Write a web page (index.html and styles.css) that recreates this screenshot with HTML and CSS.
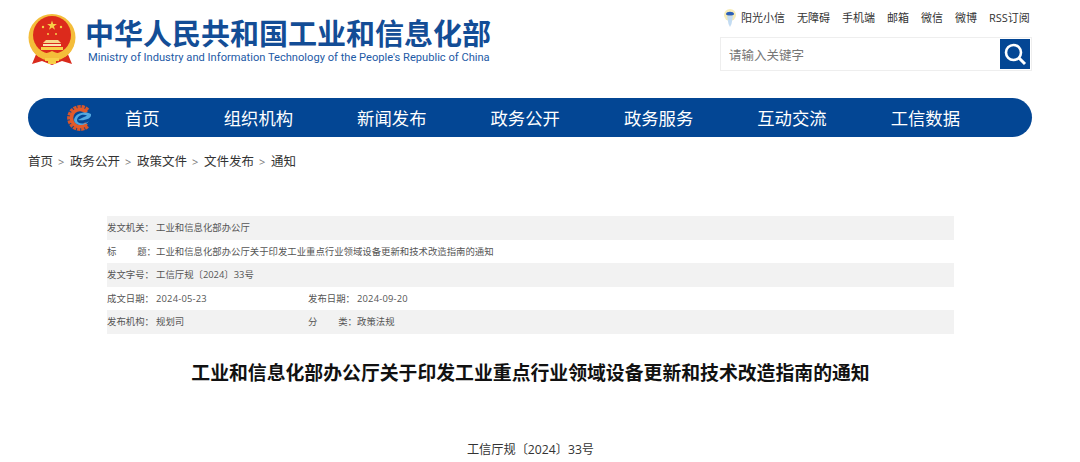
FILE: index.html

```html
<!DOCTYPE html>
<html lang="zh-CN">
<head>
  <meta charset="UTF-8" />
  <title>工业和信息化部办公厅关于印发工业重点行业领域设备更新和技术改造指南的通知</title>
  <link rel="stylesheet" href="styles.css">
</head>
<body>

<header class="top">
  <div class="brand">
    <svg class="emblem" viewBox="0 0 48 52" width="48" height="52">
      <path d="M9 38 L4 50 L14 47 L24 51 L34 47 L44 50 L39 38 Z" fill="#d92a1c"/>
      <circle cx="24" cy="23.500" r="23.500" fill="#f4bd3a"/>
      <circle cx="24" cy="21" r="19" fill="#dc2a1c"/>
      <path d="M24 6.500 l1.200 3.500 h3.700 l-3 2.200 1.100 3.500 -3 -2.200 -3 2.200 1.100 -3.500 -3 -2.200 h3.700 z" fill="#f7d048"/>
      <circle cx="15" cy="13" r="1.200" fill="#f7d048"/>
      <circle cx="33" cy="13" r="1.200" fill="#f7d048"/>
      <circle cx="20" cy="20" r="1" fill="#f7d048"/>
      <circle cx="28" cy="20" r="1" fill="#f7d048"/>
      <path d="M18 26 h12 l3 3 h-18 z" fill="#f7d88a"/>
      <path d="M15 30 h18 v2 h-18 z" fill="#fbe7b0"/>
      <path d="M13 33 h22 v3 h-22 z" fill="#f7d048"/>
      <path d="M4 33 C11 42 18 40 24 37 C30 40 37 42 44 33 C41 46 30 45 24 42 C18 45 7 46 4 33 Z" fill="#f4bd3a"/>
      <path d="M17 44 h14 v3 h-3 v3 h-8 v-3 h-3 z" fill="#f7d048"/>
    </svg>
    <div class="brand-text">
      <div class="brand-cn">中华人民共和国工业和信息化部</div>
      <div class="brand-en">Ministry of Industry and Information Technology of the People's Republic of China</div>
    </div>
  </div>
  <div class="tools">
    <div class="links">
      <svg class="sun" viewBox="0 0 14 20" width="14" height="20">
        <circle cx="7" cy="7" r="6" fill="#f6ecb8"/>
        <path d="M3 6 C3 3 11 3 11 6 C11 8 3 8 3 6 Z" fill="#2b5fb8"/>
        <path d="M4 8 L10 8 L8.500 16 L7 19 L5.500 16 Z" fill="#c3dcf2"/>
      </svg>
      <a>阳光小信</a><a>无障碍</a><a>手机端</a><a>邮箱</a><a>微信</a><a>微博</a><a>RSS订阅</a>
    </div>
    <div class="search">
      <span class="search-hint">请输入关键字</span>
      <button class="search-btn">
        <svg viewBox="0 0 24 24" width="24" height="24" fill="none" stroke="#fff">
          <circle cx="10.500" cy="10.500" r="7.500" stroke-width="2.600"/>
          <path d="M16 16 L22 22" stroke-width="3"/>
        </svg>
      </button>
    </div>
  </div>
</header>

<nav class="nav">
  <svg class="nav-logo" viewBox="0 0 26 26" width="26" height="26">
    <path d="M20.500 5.500 A10.500 10.500 0 1 0 20.500 20.500" fill="none" stroke="#d9562a" stroke-width="5" stroke-dasharray="3 0.800"/>
    <path d="M19.500 7.500 A8.500 8.500 0 1 0 19.500 18.500" fill="none" stroke="#e25a2a" stroke-width="3.500"/>
    <path d="M7 15 C8 7 20 6 24 9 C25 14 17 16 11 15 C14 13 18 12 20 10.500 C16 9 11 10 10 15 C10 19 17 20 22 16 C19 21 8 22 7 15 Z" fill="#52a8e0"/>
  </svg>
  <a>首页</a><a>组织机构</a><a>新闻发布</a><a>政务公开</a><a>政务服务</a><a>互动交流</a><a>工信数据</a>
</nav>

<div class="crumbs">
  <a>首页</a><i>&gt;</i><a>政务公开</a><i>&gt;</i><a>政策文件</a><i>&gt;</i><a>文件发布</a><i>&gt;</i><a>通知</a>
</div>

<main class="doc">
  <div class="meta">
    <div class="row"><span class="label">发文机关：</span><span>工业和信息化部办公厅</span></div>
    <div class="row"><span class="label spread">标<b>题：</b></span><span>工业和信息化部办公厅关于印发工业重点行业领域设备更新和技术改造指南的通知</span></div>
    <div class="row"><span class="label">发文字号：</span><span>工信厅规〔2024〕33号</span></div>
    <div class="row">
      <div class="cell"><span class="label">成文日期：</span><span class="date">2024-05-23</span></div>
      <div class="cell"><span class="label">发布日期：</span><span class="date">2024-09-20</span></div>
    </div>
    <div class="row">
      <div class="cell"><span class="label">发布机构：</span><span>规划司</span></div>
      <div class="cell"><span class="label spread">分<b>类：</b></span><span>政策法规</span></div>
    </div>
  </div>
  <h1>工业和信息化部办公厅关于印发工业重点行业领域设备更新和技术改造指南的通知</h1>
  <p class="docno">工信厅规〔2024〕33号</p>
</main>

</body>
</html>
```

FILE: styles.css

```css
body {
  margin: 0;
  height: 462px;
  overflow: hidden;
  background-color: #fff;
  font-family: "Open Sans", "Noto Sans CJK SC", sans-serif;
  color: #333;
}

.top {
  display: flex;
  justify-content: space-between;
  height: 98px;
  padding: 0 48px 0 28px;
}

.brand {
  display: flex;
  gap: 9px;
  padding-top: 14px;
  height: 52px;
}

.brand-cn {
  margin-top: 4px;
  font-size: 29px;
  line-height: 32px;
  font-weight: 700;
  color: #134d96;
  white-space: nowrap;
}

.brand-en {
  margin-left: 3px;
  font-family: "Roboto", "Liberation Sans", sans-serif;
  font-size: 11.130px;
  line-height: 15px;
  color: #1d5aa6;
  white-space: nowrap;
}

.tools {
  width: 312px;
}

.links {
  display: flex;
  align-items: center;
  gap: 12px;
  height: 20px;
  margin-top: 8px;
  padding-left: 3px;
  font-size: 11px;
  line-height: 20px;
  white-space: nowrap;
}

.sun {
  margin-right: -8px;
}

.search {
  display: flex;
  justify-content: space-between;
  align-items: center;
  box-sizing: border-box;
  height: 34px;
  margin-top: 9px;
  padding: 0 1px 0 8px;
  border: 1px solid #eee;
}

.search-hint {
  font-size: 12.500px;
  color: #777;
}

.search-btn {
  display: flex;
  align-items: center;
  justify-content: center;
  width: 30px;
  height: 30px;
  padding: 0;
  border: none;
  background-color: #034694;
}

.nav {
  display: flex;
  align-items: center;
  gap: 64px;
  width: 1004px;
  height: 39px;
  margin-left: 28px;
  border-radius: 20px;
  background-color: #034694;
  color: #fff;
  font-size: 17.350px;
  white-space: nowrap;
}

.nav-logo {
  margin-left: 39px;
  margin-right: -32px;
}

.crumbs {
  display: flex;
  gap: 5px;
  height: 20px;
  margin: 15px 0 0 28px;
  font-size: 12.500px;
  line-height: 20px;
  color: #333;
}

.crumbs i {
  width: 7px;
  font-style: normal;
  font-size: 11px;
  color: #777;
}

.doc {
  width: 847px;
  margin: 44px 0 0 107px;
}

.row {
  display: flex;
  align-items: center;
  box-sizing: border-box;
  height: 23.500px;
  padding-top: 1px;
  font-size: 9.400px;
  line-height: 22px;
  color: #555;
  white-space: nowrap;
}

.row:nth-child(odd) {
  background-color: #f2f2f2;
}

.cell {
  width: 201px;
}

.label {
  display: inline-block;
  width: 49px;
}

.spread {
  display: inline-flex;
  justify-content: space-between;
}

.spread b {
  font-weight: 400;
}

.date {
  letter-spacing: 0.200px;
}

h1 {
  margin: 24px 0 0;
  font-size: 18.850px;
  line-height: 30px;
  font-weight: 700;
  text-align: center;
  color: #111;
  white-space: nowrap;
}

.docno {
  margin: 52px 0 0;
  font-size: 12.200px;
  line-height: 20px;
  text-align: center;
  color: #333;
}
```
